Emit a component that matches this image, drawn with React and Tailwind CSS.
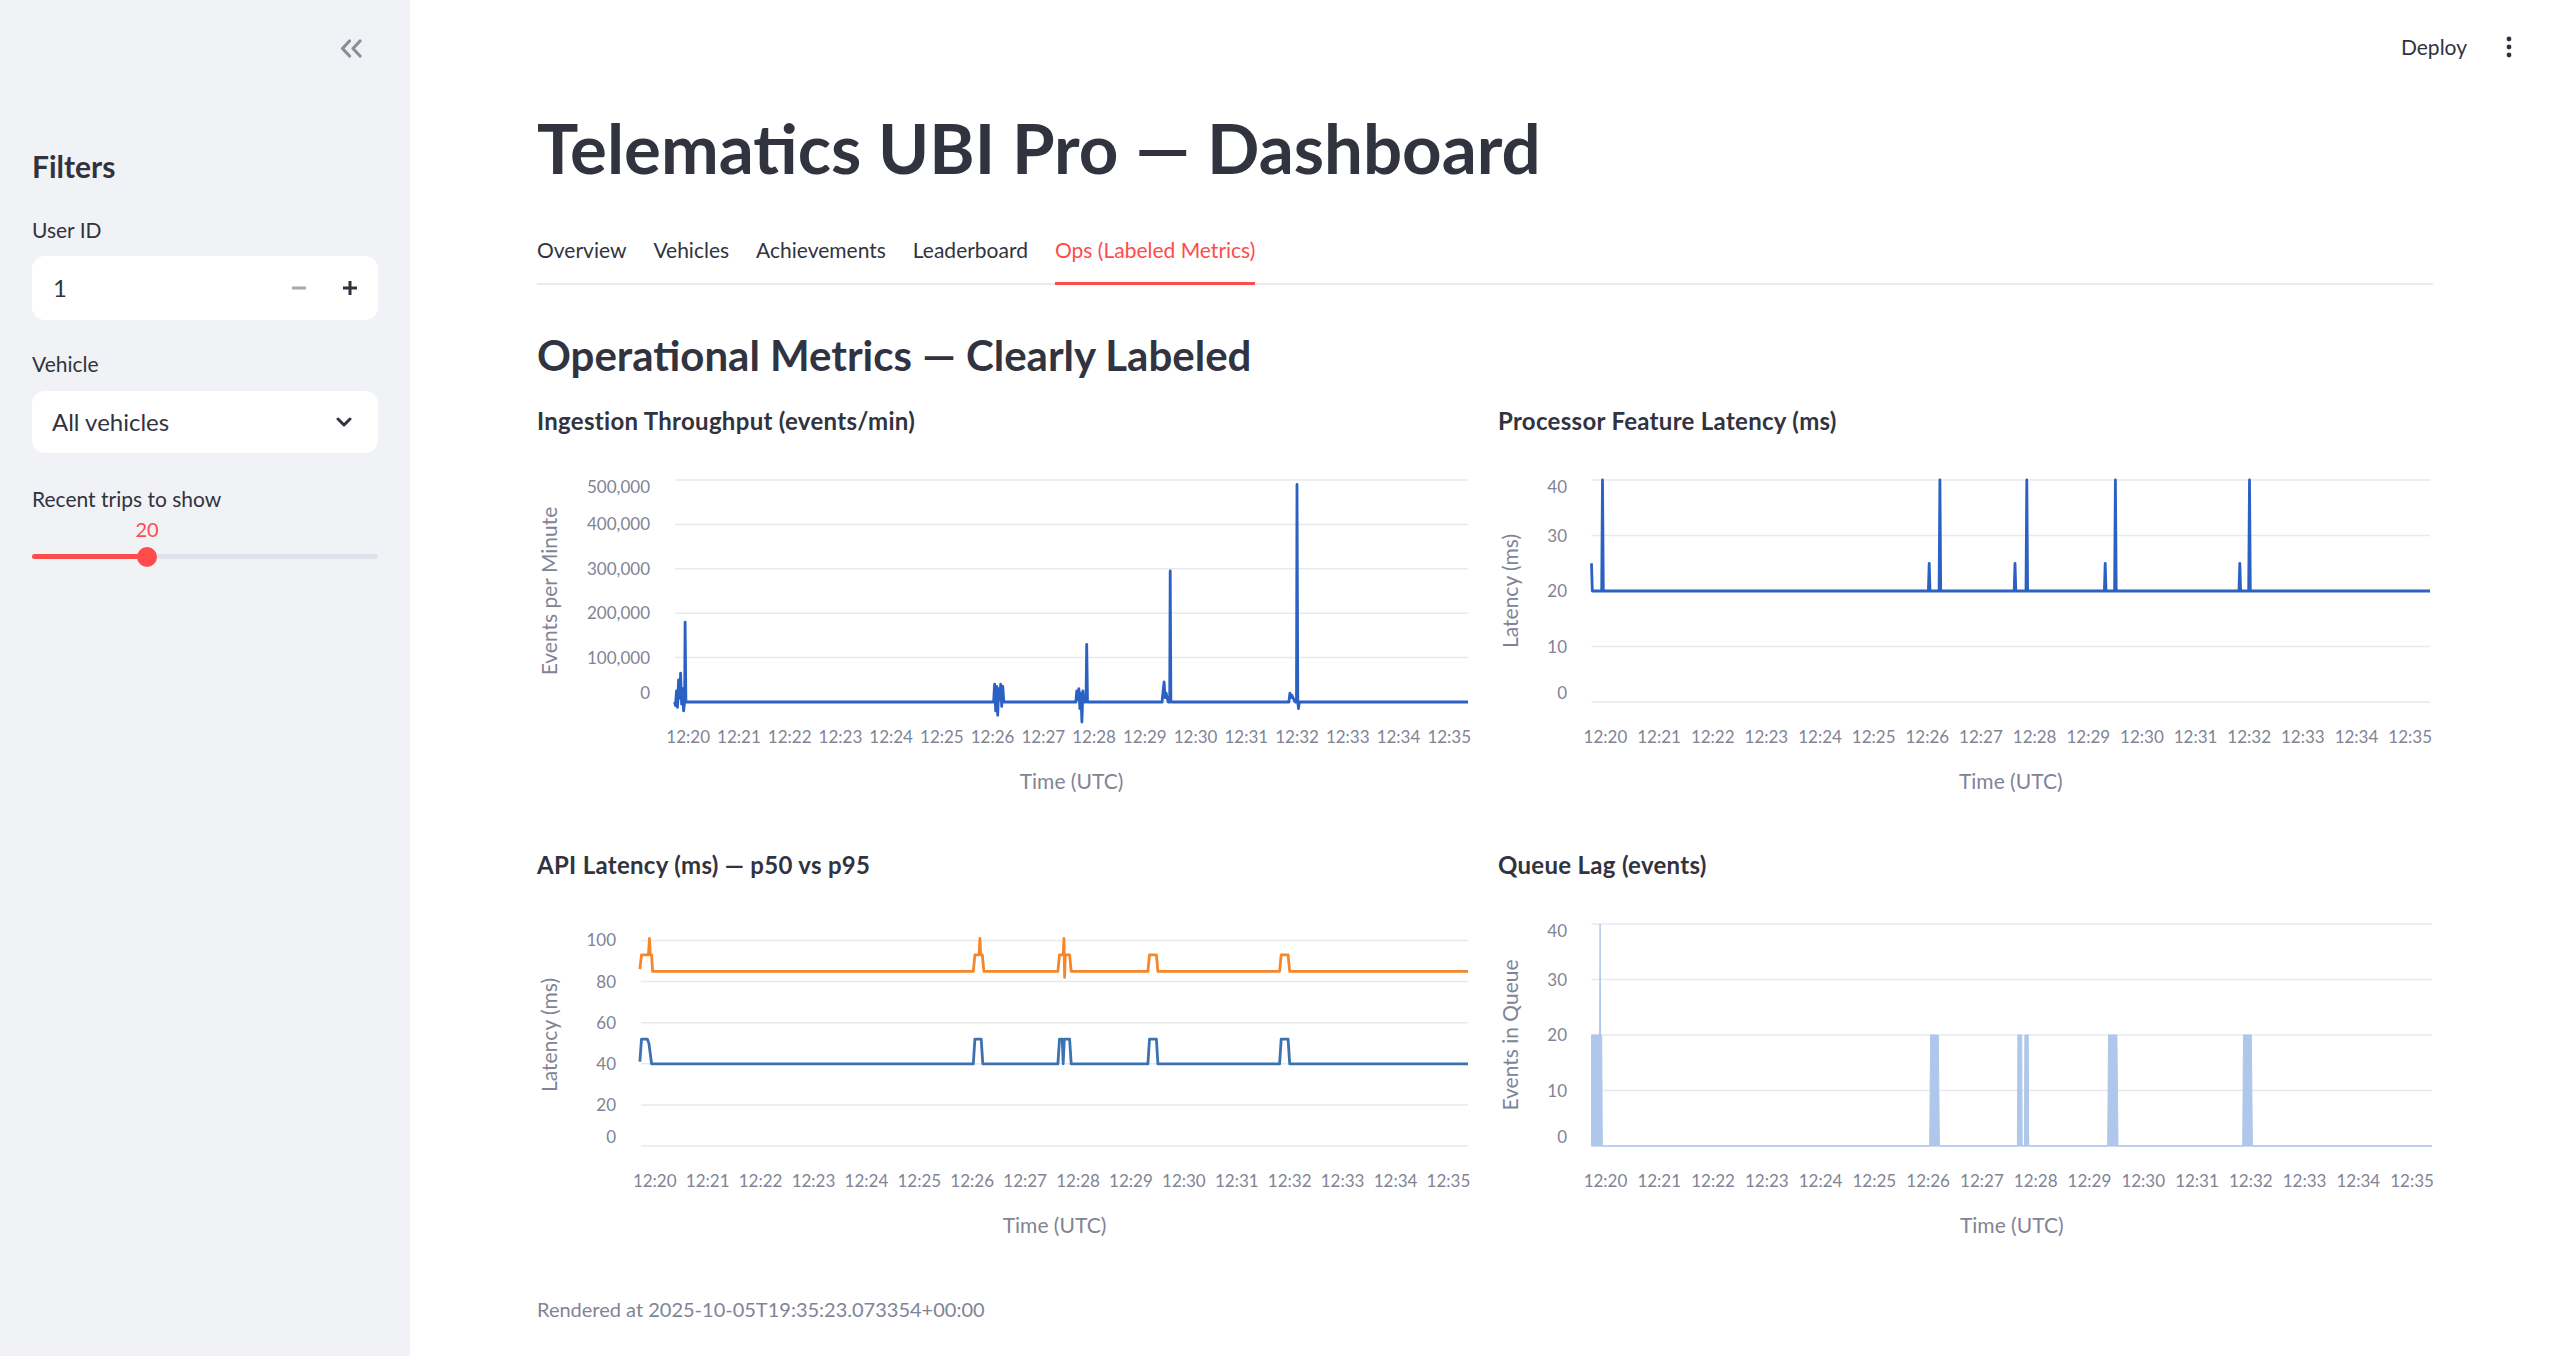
import React from "react";

// minutes relative to 12:20, shared by all four charts
const DOMAIN = [-0.26, 15.37];
const TICKS = Array.from({ length: 16 }, (_, i) => i);

const throughput = [
  [-0.27, 0], [-0.25, -8e3], [-0.23, 25e3], [-0.21, -12e3], [-0.19, 50e3], [-0.17, 8e3], [-0.15, 65e3],
  [-0.13, -5e3], [-0.11, 30e3], [-0.09, -20e3], [-0.07, 0], [-0.06, 180e3], [-0.045, 0],
  [6.02, 0], [6.04, 40e3], [6.06, -20e3], [6.08, 35e3], [6.1, -30e3], [6.12, 30e3], [6.14, 5e3],
  [6.16, 40e3], [6.18, -10e3], [6.2, 35e3], [6.22, 0],
  [7.64, 0], [7.66, 25e3], [7.68, 5e3], [7.7, 30e3], [7.72, -15e3], [7.74, 20e3], [7.76, -45e3],
  [7.78, 25e3], [7.8, 0], [7.84, 0], [7.855, 130e3], [7.87, 0],
  [9.34, 0], [9.36, 25e3], [9.38, 45e3], [9.4, 10e3], [9.42, 20e3], [9.46, 0], [9.49, 0], [9.5, 295e3], [9.515, 0],
  [11.84, 0], [11.86, 20e3], [11.88, 10e3], [11.9, 15e3], [11.96, 0], [11.99, 0], [12.0, 490e3], [12.015, 0],
  [12.03, -15e3], [12.045, 0],
  [15.37, 0],
];

const featureLatency = [
  [-0.26, 25], [-0.245, 20], [-0.07, 20], [-0.055, 40], [-0.04, 20],
  [6.02, 20], [6.035, 25], [6.05, 20], [6.22, 20], [6.235, 40], [6.25, 20],
  [7.62, 20], [7.635, 25], [7.65, 20], [7.84, 20], [7.855, 40], [7.87, 20],
  [9.3, 20], [9.315, 25], [9.33, 20], [9.49, 20], [9.505, 40], [9.52, 20],
  [11.81, 20], [11.825, 25], [11.84, 20], [11.99, 20], [12.005, 40], [12.02, 20],
  [15.37, 20],
];

const p95 = [
  [-0.28, 86], [-0.25, 93], [-0.12, 93], [-0.1, 101], [-0.085, 93], [-0.06, 93], [-0.04, 85],
  [6.02, 85], [6.05, 93], [6.13, 93], [6.145, 101], [6.16, 93], [6.19, 93], [6.22, 85],
  [7.62, 85], [7.65, 93], [7.72, 93], [7.735, 101], [7.745, 82], [7.76, 93], [7.84, 93], [7.87, 85],
  [9.32, 85], [9.35, 93], [9.48, 93], [9.51, 85],
  [11.81, 85], [11.84, 93], [11.97, 93], [12.0, 85],
  [15.37, 85],
];

const p50 = [
  [-0.28, 41], [-0.25, 52], [-0.14, 52], [-0.11, 50], [-0.06, 40],
  [6.02, 40], [6.05, 52], [6.17, 52], [6.2, 40],
  [7.62, 40], [7.65, 52], [7.7, 52], [7.72, 40], [7.74, 52], [7.84, 52], [7.87, 40],
  [9.32, 40], [9.35, 52], [9.48, 52], [9.51, 40],
  [11.81, 40], [11.84, 52], [11.97, 52], [12.0, 40],
  [15.37, 40],
];

const queueLag = [
  [-0.26, 0], [-0.26, 20], [-0.11, 20], [-0.1, 40], [-0.09, 20], [-0.07, 20], [-0.06, 0],
  [6.03, 0], [6.045, 20], [6.19, 20], [6.21, 0],
  [7.66, 0], [7.67, 20], [7.74, 20], [7.75, 0], [7.79, 0], [7.8, 20], [7.86, 20], [7.87, 0],
  [9.34, 0], [9.355, 20], [9.51, 20], [9.53, 0],
  [11.85, 0], [11.865, 20], [12.01, 20], [12.03, 0],
  [15.37, 0],
];

function Chart({ plotLeft, plotRight = 932, labelRight, yMax, ticks, fmt = (v) => v, yTitle, lines = [], area }) {
  const top = 20;
  const bottom = 242;
  const x = (m) => plotLeft + ((m - DOMAIN[0]) / (DOMAIN[1] - DOMAIN[0])) * (plotRight - plotLeft);
  const y = (v) => bottom - (v / yMax) * (bottom - top);
  const path = (pts) => pts.map((p, i) => `${i ? "L" : "M"}${x(p[0]).toFixed(1)} ${y(p[1]).toFixed(1)}`).join(" ");

  return (
    <svg width="935" height="340" className="block" fontFamily="Lato, sans-serif">
      {/* grid */}
      {ticks.map((t) => (
        <line key={t} x1={plotLeft} x2={plotRight} y1={y(t)} y2={y(t)} stroke="#e6e9f0" strokeWidth="1.5" />
      ))}

      {/* y labels, end ticks pulled inside like vega's labelFlush */}
      {ticks.map((t) => {
        const ty = y(t);
        let base = ty + 6;
        if (Math.abs(ty - top) < 1) base = ty + 13;
        if (Math.abs(ty - bottom) < 1) base = ty - 3;
        return (
          <text key={t} x={labelRight} y={base} textAnchor="end" fontSize="17" fill="#808495">
            {fmt(t)}
          </text>
        );
      })}

      {area && <path d={path(area) + " Z"} fill="#aec7ea" stroke="#aec7ea" strokeWidth="1" />}
      {lines.map((l, i) => (
        <path key={i} d={path(l.pts)} fill="none" stroke={l.color} strokeWidth="2.8" strokeLinejoin="round" />
      ))}

      {/* x labels */}
      {TICKS.map((m) => (
        <text key={m} x={x(m)} y={bottom + 41} textAnchor="middle" fontSize="17" fill="#808495">
          {`12:${20 + m}`}
        </text>
      ))}
      <text x={(plotLeft + plotRight) / 2} y={bottom + 87} textAnchor="middle" fontSize="21" fill="#808495">
        Time (UTC)
      </text>
      <text transform={`translate(20 ${(top + bottom) / 2}) rotate(-90)`} textAnchor="middle" fontSize="21" fill="#808495">
        {yTitle}
      </text>
    </svg>
  );
}

function ChartCard({ title, children }) {
  return (
    <div>
      <h4 className="h-[42px] leading-[42px] text-[24px] tracking-[0.3px] font-bold">{title}</h4>
      <div className="mt-[18px]">{children}</div>
    </div>
  );
}

function Sidebar() {
  return (
    <aside className="w-[410px] shrink-0 bg-[#f0f2f6] px-[32px]">
      <div className="h-[96px] flex items-center justify-end pr-[15px]">
        <svg width="24" height="19" viewBox="0 0 24 19" fill="none" stroke="#8b8d98" strokeWidth="3.2" strokeLinecap="round" strokeLinejoin="round">
          <path d="M10.5 2L3.5 9.5l7 7.5M21 2l-7 7.5 7 7.5" />
        </svg>
      </div>

      <h2 className="mt-[50px] h-[41px] leading-[41px] text-[30px] font-bold">Filters</h2>

      <p className="mt-[28px] h-[29px] leading-[29px] text-[21px]">User ID</p>
      <div className="mt-[12px] h-[64px] bg-white rounded-[13px] flex items-center pl-[21px] pr-[8px]">
        <span className="flex-1 text-[24px]">1</span>
        <button className="w-[40px] h-[40px] flex items-center justify-center">
          <svg width="14" height="4" viewBox="0 0 14 4">
            <rect x="0" y="0.5" width="14" height="3" fill="#a6a9b3" />
          </svg>
        </button>
        <button className="ml-[11px] w-[40px] h-[40px] flex items-center justify-center">
          <svg width="14" height="14" viewBox="0 0 14 14">
            <rect x="0" y="5.5" width="14" height="3" fill="#31333f" />
            <rect x="5.5" y="0" width="3" height="14" fill="#31333f" />
          </svg>
        </button>
      </div>

      <p className="mt-[29px] h-[30px] leading-[30px] text-[21px]">Vehicle</p>
      <div className="mt-[12px] h-[62px] bg-white rounded-[13px] flex items-center pl-[20px] pr-[26px]">
        <span className="flex-1 text-[24px]">All vehicles</span>
        <svg width="16" height="10" viewBox="0 0 16 10" fill="none" stroke="#31333f" strokeWidth="3" strokeLinecap="round" strokeLinejoin="round">
          <path d="M2 2l6 6 6-6" />
        </svg>
      </div>

      <p className="mt-[31px] h-[30px] leading-[30px] text-[21px]">Recent trips to show</p>
      <div className="relative h-[56px]">
        {/* value bubble over the thumb */}
        <span className="absolute left-[95px] top-0 w-[40px] h-[30px] leading-[30px] text-center text-[20px] text-[#ff4b4b]">20</span>
        <div className="absolute left-0 right-0 top-[40px] h-[5px] rounded-full bg-[#dfe2e8]" />
        <div className="absolute left-0 w-[115px] top-[40px] h-[5px] rounded-full bg-[#ff4b4b]" />
        <div className="absolute left-[105px] top-[32.5px] w-[20px] h-[20px] rounded-full bg-[#ff4b4b]" />
      </div>
    </aside>
  );
}

export default function App() {
  const tabs = ["Overview", "Vehicles", "Achievements", "Leaderboard", "Ops (Labeled Metrics)"];

  return (
    <div className="flex min-h-[1356px] w-full bg-white font-['Lato',sans-serif] text-[#31333f]">
      <Sidebar />

      <main className="flex-1 flex flex-col">
        {/* toolbar */}
        <div className="h-[94px] flex items-center justify-end gap-[30px] pr-[39px]">
          <span className="text-[21px]">Deploy</span>
          <svg width="24" height="24" viewBox="0 0 24 24" fill="#31333f">
            <circle cx="12" cy="4" r="2.4" />
            <circle cx="12" cy="12" r="2.4" />
            <circle cx="12" cy="20" r="2.4" />
          </svg>
        </div>

        <div className="px-[127px]">
          <h1 className="h-[108px] leading-[108px] text-[69px] font-bold">Telematics UBI Pro — Dashboard</h1>

          {/* tabs */}
          <div className="mt-[31px] flex gap-[27px] border-b-2 border-[#ebebed]">
            {tabs.map((t, i) => (
              <button
                key={t}
                className={`h-[52px] -mb-[2px] pb-[15px] border-b-[3px] leading-[34px] text-[21px] ${
                  i === 4 ? "border-[#ff4b4b] text-[#ff4b4b]" : "border-transparent"
                }`}
              >
                {t}
              </button>
            ))}
          </div>

          <h2 className="mt-[40px] h-[60px] leading-[60px] text-[42px] font-bold">Operational Metrics — Clearly Labeled</h2>

          <div className="mt-[15px] grid grid-cols-2 gap-x-[26px] gap-y-[44px]">
            <ChartCard title="Ingestion Throughput (events/min)">
              <Chart
                plotLeft={138}
                plotRight={931}
                labelRight={113}
                yMax={500000}
                ticks={[0, 100000, 200000, 300000, 400000, 500000]}
                fmt={(v) => v.toLocaleString("en-US")}
                yTitle="Events per Minute"
                lines={[{ pts: throughput, color: "#2c61c4" }]}
              />
            </ChartCard>
            <ChartCard title="Processor Feature Latency (ms)">
              <Chart
                plotLeft={93.5}
                labelRight={69}
                yMax={40}
                ticks={[0, 10, 20, 30, 40]}
                yTitle="Latency (ms)"
                lines={[{ pts: featureLatency, color: "#2c61c4" }]}
              />
            </ChartCard>
            <ChartCard title="API Latency (ms) — p50 vs p95">
              <Chart
                plotLeft={104}
                plotRight={931}
                labelRight={79}
                yMax={108}
                ticks={[0, 20, 40, 60, 80, 100]}
                yTitle="Latency (ms)"
                lines={[
                  { pts: p95, color: "#f5862a" },
                  { pts: p50, color: "#3c72af" },
                ]}
              />
            </ChartCard>
            <ChartCard title="Queue Lag (events)">
              <Chart
                plotLeft={93.5}
                plotRight={934}
                labelRight={69}
                yMax={40}
                ticks={[0, 10, 20, 30, 40]}
                yTitle="Events in Queue"
                area={queueLag}
              />
            </ChartCard>
          </div>

          <p className="mt-[50px] h-[30px] leading-[30px] text-[20px] text-[#808495]">
            Rendered at 2025-10-05T19:35:23.073354+00:00
          </p>
        </div>
      </main>
    </div>
  );
}
